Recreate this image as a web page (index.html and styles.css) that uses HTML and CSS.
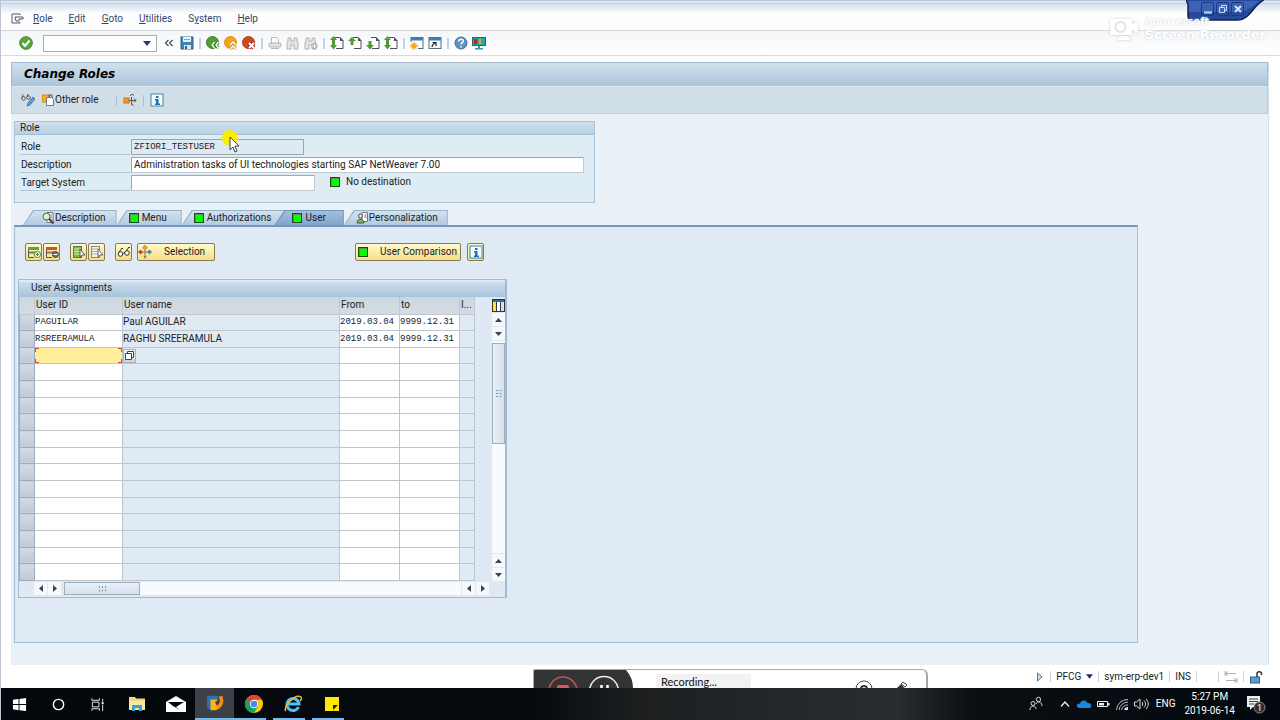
FILE: index.html
```html
<!DOCTYPE html>
<html lang="en">
<head>
<meta charset="utf-8">
<title>Change Roles</title>
<link rel="stylesheet" href="styles.css">
</head>
<body>
<svg class="defs" aria-hidden="true">
  <defs>
    <symbol id="page" viewBox="0 0 14 14"><path d="M5 1.500h5l3 3v8H6" fill="#fff" stroke="#4b5054"/><path d="M10 1v4h3.500z" fill="#4b5054"/></symbol>
    <symbol id="bino" viewBox="0 0 14 14"><path d="M2 2h3v3h3V2h3v3l1 2v6H8V9H5v4H1V7l1-2z" fill="#e4e4e4" stroke="#b4b4b4"/></symbol>
    <symbol id="info" viewBox="0 0 14 14"><rect x="1" y="1" width="12" height="12" fill="#f4fbff" stroke="#3d86a8"/><path d="M6 3h2.500v2H6zM5 6h3.500v4.500H10V12H5v-1.500h1V7.500H5z" fill="#1a76b0"/></symbol>
    <symbol id="led" viewBox="0 0 10 10"><rect x=".5" y=".5" width="9" height="9" fill="#0f0" stroke="#1d4a1d"/><path d="M1.500 9V1.500H9" fill="none" stroke="#5f8f4f"/></symbol>
  </defs>
</svg>

<header class="menubar">
  <svg class="i14" viewBox="0 0 14 14"><path d="M10 3V2H2v9h8v-1" fill="none" stroke="#4a5568"/><path d="M5 5h8v2H9v2H6z" fill="#fff" stroke="#4a5568"/></svg>
  <nav class="menus">
    <button><u>R</u>ole</button><button><u>E</u>dit</button><button><u>G</u>oto</button><button><u>U</u>tilities</button><button>S<u>y</u>stem</button><button><u>H</u>elp</button>
  </nav>
</header>

<div class="toolbar">
  <button class="ok" aria-label="Enter"><svg class="i14" viewBox="0 0 14 14"><circle cx="7" cy="7" r="6.300" fill="#57a83a" stroke="#3c8428"/><path d="M3.500 7l2.500 3 4.500-5.500" fill="none" stroke="#fff" stroke-width="2"/></svg></button>
  <div class="combo"><input aria-label="Command field"><button aria-label="Show history"><svg viewBox="0 0 8 5"><path d="M0 0h8L4 5z" fill="#1f3c78"/></svg></button></div>
  <button class="collapse" aria-label="Collapse command field"><svg class="i14" viewBox="0 0 14 14"><path d="M6.500 4l-3 3 3 3M10.500 4l-3 3 3 3" fill="none" stroke="#3f4650" stroke-width="1.200"/></svg></button>
  <button aria-label="Save"><svg class="i14" viewBox="0 0 14 14"><rect x="1" y="1" width="12" height="12" fill="#3f82b5" stroke="#2d668f"/><rect x="3" y="1" width="8" height="5" fill="#e6f3fb"/><path d="M4 3.500h6" stroke="#7aa5c3"/><rect x="4" y="9" width="7" height="4" fill="#d7e6f1"/><rect x="5" y="10" width="2" height="3" fill="#2b5f88"/></svg></button>
  <i class="sep"></i>
  <div class="group">
    <button aria-label="Back"><svg class="i14" viewBox="0 0 14 14"><circle cx="6.500" cy="6.500" r="6" fill="#4f9e35" stroke="#3d8029"/><path d="M8.500 6l-2.500 3 2.500 3M12.500 6L10 9l2.500 3" fill="none" stroke="#3d8029" stroke-width="3"/><path d="M8.500 6l-2.500 3 2.500 3M12.500 6L10 9l2.500 3" fill="none" stroke="#fff" stroke-width="1.300"/></svg></button>
    <button aria-label="Exit"><svg class="i14" viewBox="0 0 14 14"><circle cx="6.500" cy="6.500" r="6" fill="#f2a51c" stroke="#d78c18"/><path d="M6 9l3-3 3 3M6 13l3-3 3 3" fill="none" stroke="#d78c18" stroke-width="3"/><path d="M6 9l3-3 3 3M6 13l3-3 3 3" fill="none" stroke="#fff" stroke-width="1.500"/></svg></button>
    <button aria-label="Cancel"><svg class="i14" viewBox="0 0 14 14"><circle cx="6.500" cy="6.500" r="6" fill="#cf4a1a" stroke="#b04018"/><path d="M7 7l5 5M12 7l-5 5" stroke="#a33" stroke-width="4"/><path d="M7 7l5 5M12 7l-5 5" stroke="#fff" stroke-width="2"/></svg></button>
  </div>
  <i class="sep"></i>
  <div class="group">
    <button aria-label="Print" disabled><svg class="i14" viewBox="0 0 14 14"><path d="M3.500 7V1.500h5l2 2V7" fill="#fafafa" stroke="#b8b8b8"/><rect x="1" y="7" width="12" height="4" rx="1" fill="#e2e2e2" stroke="#b4b4b4"/><path d="M3 12.500h8" stroke="#b8b8b8"/></svg></button>
    <button aria-label="Find" disabled><svg class="i14"><use href="#bino"/></svg></button>
    <button aria-label="Find next" disabled><svg class="i14" viewBox="0 0 14 14"><use href="#bino" width="14" height="14"/><path d="M10.500 7v6M7.500 10h6" stroke="#aaa" stroke-width="3"/><path d="M10.500 8v4M8.500 10h4" stroke="#fff"/></svg></button>
  </div>
  <i class="sep"></i>
  <div class="group">
    <button aria-label="First page"><svg class="i14" viewBox="0 0 14 14"><use href="#page" width="14" height="14"/><path d="M0 4l3.500-4L7 4H5v5h2l-3.500 4.500L0 9h2V4z" fill="#4d9a36"/></svg></button>
    <button aria-label="Previous page"><svg class="i14" viewBox="0 0 14 14"><use href="#page" width="14" height="14"/><path d="M0 5l4-4 4 4H5.500v4h-3V5z" fill="#4d9a36"/></svg></button>
    <button aria-label="Next page"><svg class="i14" viewBox="0 0 14 14"><use href="#page" width="14" height="14"/><path d="M0 9h2.500V5h3v4H8l-4 4.500z" fill="#4d9a36"/></svg></button>
    <button aria-label="Last page"><svg class="i14" viewBox="0 0 14 14"><use href="#page" width="14" height="14"/><path d="M0 4l3.500-4L7 4H5v5h2l-3.500 4.500L0 9h2V4z" fill="#4d9a36"/></svg></button>
  </div>
  <i class="sep"></i>
  <div class="group">
    <button aria-label="New session"><svg class="i14" viewBox="0 0 14 14"><rect x="1" y="1.500" width="12" height="11" fill="#f8fcff" stroke="#4f6f86"/><path d="M1 3h12" stroke="#3f7fb5" stroke-width="3"/><path d="M0 6h8v8H0z" fill="#fbfdff"/><path d="M4 6v8M0 10h8M1.500 7.500l5 5M6.500 7.500l-5 5" stroke="#f5a623" stroke-width="1.300"/></svg></button>
    <button aria-label="Create shortcut"><svg class="i14" viewBox="0 0 14 14"><rect x="1" y="1.500" width="12" height="11" fill="#f8fcff" stroke="#4f6f86"/><path d="M1 3h12" stroke="#3f7fb5" stroke-width="3"/><path d="M4 11c0-2 1-3 3-4M4.500 6.500H8V10" fill="none" stroke="#222" stroke-width="1.200"/></svg></button>
  </div>
  <i class="sep"></i>
  <div class="group">
    <button aria-label="Help"><svg class="i14" viewBox="0 0 14 14"><circle cx="7" cy="7" r="6" fill="#5b93c4" stroke="#3f6d96"/><path d="M4.800 5.500c0-3 4.500-3 4.500-.4C9.300 7 7 6.700 7 8.500M7 10v1.500" fill="none" stroke="#fff" stroke-width="1.500"/></svg></button>
    <button aria-label="Customize layout"><svg class="i14" viewBox="0 0 14 14"><rect x=".5" y="1.500" width="13" height="8" fill="#25a6a9" stroke="#3b5b6c"/><path d="M2 3h3v5H2z" fill="#c11f24"/><path d="M5 3h2v5H5z" fill="#52a02e"/><path d="M7 3h2v5H7z" fill="#d9b41e"/><path d="M6 10h2v2h3v1.500H3V12h3z" fill="#3c8fae"/></svg></button>
  </div>
</div>

<main class="work">
  <h1 class="title">Change Roles</h1>
  <div class="appbar">
    <button aria-label="Display or change"><svg class="i14" viewBox="0 0 14 14"><path d="M1 5l1-3.500M6 4l1-3" stroke="#555" fill="none"/><circle cx="2.500" cy="5.500" r="1.800" fill="none" stroke="#555"/><circle cx="7.500" cy="4.500" r="1.800" fill="none" stroke="#555"/><path d="M6 13l1-3 5-6 2 2-5 6z" fill="#5f9fcb" stroke="#3c6f94" stroke-width=".8"/></svg></button>
    <button class="other"><svg class="i12" viewBox="0 0 12 12"><rect x=".5" y="1" width="7" height="7" fill="#f5ae27" stroke="#d8901a"/><path d="M4.500 3.500h5l2 2v6h-7z" fill="#fff" stroke="#777"/><path d="M7 3V1h3v3" fill="none" stroke="#555"/></svg>Other role</button>
    <i class="sep"></i>
    <button aria-label="Transport"><svg class="i14" viewBox="0 0 14 14"><rect x="1" y="5" width="5" height="5" fill="#f39a25" stroke="#cd7614"/><path d="M6 7.500h7M11 5.500l2 2-2 2M8.500 4v8M7 3l1.500-1.500L11 2M8.500 11l2 2" fill="none" stroke="#555"/></svg></button>
    <i class="sep"></i>
    <button aria-label="Information"><svg class="i14"><use href="#info"/></svg></button>
  </div>

  <div class="content">
    <section class="rolebox">
      <h2>Role</h2>
      <div class="field"><label for="role">Role</label><input id="role" class="mono readonly w-role" value="ZFIORI_TESTUSER" readonly></div>
      <div class="field"><label for="desc">Description</label><input id="desc" class="w-desc" value="Administration tasks of UI technologies starting SAP NetWeaver 7.00"></div>
      <div class="field"><label for="target">Target System</label><input id="target" class="w-target"><span class="dest"><svg class="i10"><use href="#led"/></svg>No destination</span></div>
    </section>

    <div class="tabs" role="tablist">
      <button role="tab" class="tab first"><span><svg class="i12" viewBox="0 0 12 12"><path d="M5 .5h6v10H5z" fill="#fff" stroke="#777"/><path d="M7 3h3M7 5h3M7 7h3" stroke="#888"/><circle cx="4.500" cy="4.500" r="3.500" fill="#dff0c8" stroke="#4c6b3c"/><path d="M7 7l4.500 4.500" stroke="#444" stroke-width="2"/></svg>Description</span></button>
      <button role="tab" class="tab"><span class="ledgap"><svg class="i10"><use href="#led"/></svg>Menu</span></button>
      <button role="tab" class="tab"><span class="ledgap"><svg class="i10"><use href="#led"/></svg>Authorizations</span></button>
      <button role="tab" class="tab active" aria-selected="true"><span class="ledgap"><svg class="i10"><use href="#led"/></svg>User</span></button>
      <button role="tab" class="tab last"><span><svg class="i12" viewBox="0 0 12 12"><path d="M6 .5h5.500v9H6z" fill="#fff" stroke="#777"/><path d="M8.500 3h2M8.500 5h2" stroke="#555"/><circle cx="4.500" cy="4" r="2" fill="#f1f1f1" stroke="#444"/><path d="M1 11c0-5 7-5 7 0z" fill="#7cb356" stroke="#3f5f31"/></svg>Personalization</span></button>
    </div>

    <section class="panel">
      <div class="actions">
        <div class="pair">
          <button class="yb sq" aria-label="Insert row"><svg class="i14" viewBox="0 0 14 14"><path d="M1.500 2v10.500H7" fill="none" stroke="#555"/><path d="M1 3.500h11" stroke="#5ca832" stroke-width="3"/><path d="M2 7.500h9" stroke="#777" stroke-width="2"/><circle cx="10.500" cy="9.500" r="3" fill="#fff" stroke="#3e8a35"/><path d="M10.500 8v3M9 9.500h3" stroke="#3e8a35"/></svg></button>
          <button class="yb sq" aria-label="Delete row"><svg class="i14" viewBox="0 0 14 14"><path d="M1.500 2v10.500H7" fill="none" stroke="#555"/><path d="M1 3.500h11" stroke="#d2501e" stroke-width="3"/><path d="M2 7.500h9" stroke="#777" stroke-width="2"/><circle cx="10.500" cy="9.500" r="3" fill="#777" stroke="#444"/><path d="M8.500 9.500h4" stroke="#fff"/></svg></button>
        </div>
        <div class="pair">
          <button class="yb sq" aria-label="Select all"><svg class="i14" viewBox="0 0 14 14"><rect x="1.500" y="1.500" width="8" height="11" fill="#7cba4d" stroke="#5b7350"/><path d="M2 4h7M2 6.500h7M2 9h7" stroke="#d6eabf"/><path d="M8 4v8l2-2h3z" fill="#fff" stroke="#555"/></svg></button>
          <button class="yb sq" aria-label="Deselect all"><svg class="i14" viewBox="0 0 14 14"><rect x="1.500" y="1.500" width="8" height="11" fill="#f6f6ee" stroke="#888"/><path d="M2 4h7M2 6.500h7M2 9h7" stroke="#aaa"/><path d="M8 4v8l2-2h3z" fill="#fff" stroke="#666"/></svg></button>
        </div>
        <button class="yb sq" aria-label="Display"><svg class="i14" viewBox="0 0 14 14"><path d="M1.500 8l3.500-5 1 1M8.500 7l3.500-5 1 1M6 9c1-2 2-2 2 0" fill="none" stroke="#333"/><circle cx="3.500" cy="9" r="2.300" fill="#fff" stroke="#333"/><circle cx="10" cy="8" r="2.300" fill="#fff" stroke="#333"/></svg></button>
        <button class="yb sel-btn"><svg class="i14" viewBox="0 0 14 14"><path d="M7 3v9M3 7h8" stroke="#777"/><path d="M7 0l2.500 3L7 5 4.500 3z" fill="#f1a22b" stroke="#c47a15" stroke-width=".6"/><path d="M0 7l2.500-2.500L5 7 2.500 9.500z" fill="#d4421e"/><path d="M9 7l2.500-2.500L14 7l-2.500 2.500z" fill="#3d8fb8"/><path d="M5.500 11h3L7 14z" fill="#777"/></svg><span>Selection</span></button>
        <button class="yb cmp-btn"><svg class="i10"><use href="#led"/></svg><span>User Comparison</span></button>
        <button class="yb sq info-btn" aria-label="Information"><svg class="i14"><use href="#info"/></svg></button>
      </div>

      <section class="gridbox">
        <h2>User Assignments</h2>
        <div class="gridarea">
          <div class="tablewrap">
            <table>
              <colgroup><col class="c-sel"><col class="c-id"><col class="c-name"><col class="c-date"><col class="c-date"><col class="c-ind"></colgroup>
              <thead><tr><th aria-label="Row"></th><th>User ID</th><th>User name</th><th>From</th><th>to</th><th>I...</th></tr></thead>
              <tbody id="rows"></tbody>
            </table>
          </div>
          <div class="vscroll">
            <button class="cfg" aria-label="Table settings"><svg viewBox="0 0 13 13"><rect x=".5" y=".5" width="12" height="12" fill="#fff" stroke="#333"/><path d="M1 2h11" stroke="#2d6fb0" stroke-width="2"/><path d="M1 3h3.500v9H1z" fill="#ffe52e"/><path d="M9 3h3v9H9z" fill="#cfe4f6"/><path d="M4.500 3v9M8.500 3v9" stroke="#333"/></svg></button>
            <button class="arr" aria-label="Scroll up"><svg viewBox="0 0 7 4"><path d="M0 4h7L3.500 0z"/></svg></button>
            <button class="arr" aria-label="Scroll down"><svg viewBox="0 0 7 4"><path d="M0 0h7L3.500 4z"/></svg></button>
            <div class="track"><div class="thumb"><svg viewBox="0 0 6 7"><path d="M0 .5h2M3.500 .5h2M0 3.500h2M3.500 3.500h2M0 6.500h2M3.500 6.500h2"/></svg></div></div>
            <button class="arr" aria-label="Page up"><svg viewBox="0 0 7 4"><path d="M0 4h7L3.500 0z"/></svg></button>
            <button class="arr" aria-label="Page down"><svg viewBox="0 0 7 4"><path d="M0 0h7L3.500 4z"/></svg></button>
          </div>
        </div>
        <div class="hscroll">
          <button class="arr" aria-label="Scroll left"><svg class="hz" viewBox="0 0 4 7"><path d="M4 0v7L0 3.500z"/></svg></button>
          <button class="arr" aria-label="Scroll right"><svg class="hz" viewBox="0 0 4 7"><path d="M0 0v7l4-3.500z"/></svg></button>
          <div class="track"><div class="thumb"><svg class="grip" viewBox="0 0 7 6"><path d="M.5 0v2M3.500 0v2M6.500 0v2M.5 3.500v2M3.500 3.500v2M6.500 3.500v2"/></svg></div></div>
          <button class="arr" aria-label="Page left"><svg class="hz" viewBox="0 0 4 7"><path d="M4 0v7L0 3.500z"/></svg></button>
          <button class="arr" aria-label="Page right"><svg class="hz" viewBox="0 0 4 7"><path d="M0 0v7l4-3.500z"/></svg></button>
        </div>
      </section>
    </section>
  </div>
</main>

<footer class="status">
  <svg class="i10" viewBox="0 0 10 10"><path d="M2.500 1v8L7 5z" fill="#cfe3f5" stroke="#3f78ad"/></svg>
  <i class="bar"></i><button>PFCG<svg class="dd" viewBox="0 0 8 5"><path d="M0 0h8L4 5z" fill="#1f3560"/></svg></button>
  <i class="bar"></i><span>sym-erp-dev1</span>
  <i class="bar"></i><span>INS</span>
  <i class="bar"></i><i class="bar later"></i>
  <svg class="i14" viewBox="0 0 14 14"><path d="M1 1v5M1 3.500h11M4 1.500l-3 2 3 2M13 8v5M2 10.500h11M10 8.500l3 2-3 2" fill="none" stroke="#aeb2b8"/></svg>
  <i class="bar"></i>
  <svg class="i14" viewBox="0 0 14 14"><rect x="1.500" y="7" width="9" height="6" fill="#5d9dca" stroke="#2f5d82"/><path d="M8 7V3.500c0-2.500 4.500-2.500 4.500 0V5" fill="none" stroke="#333" stroke-width="1.500"/></svg>
</footer>

<footer class="taskbar">
  <div class="apps">
    <button aria-label="Start"><svg viewBox="0 0 16 16"><path d="M1 3l6-1v5.500H1zM8 2l7-1v6.500H8zM1 8.500h6V14l-6-1zM8 8.500h7V15l-7-1z" fill="#fff"/></svg></button>
    <button aria-label="Cortana"><svg viewBox="0 0 16 16"><circle cx="8" cy="8" r="5.500" fill="none" stroke="#fff" stroke-width="1.500"/></svg></button>
    <button aria-label="Task view"><svg viewBox="0 0 16 16"><path d="M2 1.500v2h8v-2M2 14.500v-2h8v2M2.500 5.500h7v5h-7zM13.500 2v3M13.500 8v7" fill="none" stroke="#eee"/><path d="M12.500 5.500h2v2h-2z" fill="#fff"/></svg></button>
    <button aria-label="File Explorer"><svg viewBox="0 0 18 16"><path d="M1 1h6l1 1.500h9V14H1z" fill="#f6d778"/><path d="M1 5h16v9H1z" fill="#fbe6a0"/><path d="M4 15V9h10v6h-3v-3H7v3z" fill="#37a3d6"/></svg></button>
    <button aria-label="Mail"><svg class="mail" viewBox="0 0 20 16"><path d="M0 6l10-6 10 6v10H0z" fill="#fff"/><path d="M2 6h16l-8 5 4 3-7-4z" fill="#05080d"/></svg></button>
    <button aria-label="SAP Logon" class="current"><svg viewBox="0 0 20 18"><path d="M1 1h13l-1 4-6 1-1 10-5-1z" fill="#2e6fae"/><path d="M5 5l8 0-1 2-2 1 2 4 4-2c2 0 0 6-6 7H5z" fill="#fbb315"/><path d="M13 11c3-2 3-6 1-9l4-1c3 7 0 14-6 15z" fill="#f08e12"/></svg></button>
    <button aria-label="Chrome" class="running"><svg viewBox="0 0 18 18"><circle cx="9" cy="9" r="9" fill="#f9c813"/><path d="M9 9L1.200 4.500A9 9 0 0 1 16.800 4.500z" fill="#dc4437"/><path d="M9 9L1.200 4.500A9 9 0 0 0 9 18l4-7z" fill="#1ba15f"/><path d="M9 9h8.900A9 9 0 0 0 16.800 4.800H9z" fill="#f9c813"/><circle cx="9" cy="9" r="4.200" fill="#fff"/><circle cx="9" cy="9" r="3.300" fill="#4587f3"/></svg></button>
    <button aria-label="Internet Explorer" class="running"><svg viewBox="0 0 18 18"><path d="M14.500 12A6 6 0 1 1 15 9H4.500" fill="none" stroke="#4cc0f4" stroke-width="3"/><path d="M2 16C-2 13 11-2 17 2c1 1 0 3-1 4" fill="none" stroke="#f1b72d" stroke-width="1.500"/></svg></button>
    <button aria-label="Sticky Notes" class="running"><svg viewBox="0 0 18 18"><path d="M2 2h14v14H2z" fill="#ffe900"/><path d="M10 10h5l-5 5z" fill="#222"/></svg></button>
  </div>
  <div class="tray">
    <svg viewBox="0 0 16 16"><path d="M2 14c0-5 6-5 6-1M8 8c1-3 6-3 6 2" fill="none" stroke="#ddd"/><circle cx="5" cy="7.500" r="2" fill="none" stroke="#ddd"/><circle cx="10.500" cy="3.500" r="2.200" fill="none" stroke="#ddd"/></svg>
    <svg class="chev" viewBox="0 0 16 16"><path d="M4 10.500l4-4.500 4 4.500" fill="none" stroke="#eee" stroke-width="1.300"/></svg>
    <svg viewBox="0 0 16 16"><path d="M3 12c-4-1-2-5 1-4.500 1-4 6-4 7.500-.5 4-.5 5 4 2 5z" fill="#1a87dc"/></svg>
    <svg viewBox="0 0 16 16"><path d="M2.500 5.500h10v5h-10z" fill="none" stroke="#eee"/><path d="M4 7h5v2.500H4zM13 7h1.500v2.500H13z" fill="#eee"/></svg>
    <svg viewBox="0 0 16 16"><path d="M2.500 14A11 11 0 0 1 14 3.500M5 14A9 9 0 0 1 14 6M7.500 14A6 6 0 0 1 14 9" fill="none" stroke="#bbb"/><path d="M10 14a4 4 0 0 1 4-3v3z" fill="#ddd"/></svg>
    <svg viewBox="0 0 16 16"><path d="M1.500 6v4h2L7 13V3L3.500 6zM9 6c1 1 1 3 0 4M11 4.500c2 2 2 5 0 7M13 3c3 3 3 7 0 10" fill="none" stroke="#ddd"/></svg>
    <span class="lang">ENG</span>
    <time class="clock"><span>5:27 PM</span><span>2019-06-14</span></time>
    <svg class="note" viewBox="0 0 20 20"><path d="M1 2h13v11H7l-3 3v-3H1z" fill="#eee"/><path d="M3 5h9M3 7.500h9M3 10h5" stroke="#444"/><circle cx="13.500" cy="13.500" r="5.500" fill="#2c3033" stroke="#888"/><text x="13.500" y="17" text-anchor="middle">1</text></svg>
  </div>
</footer>

<div class="wincap">
  <svg class="capshape" viewBox="0 0 78 21"><path d="M0 0h78C68 4 64 20 52 20H6q-4 0-4-4V4z" fill="#254a9c"/><path d="M2 1h72C67 5 62 12 52 12H2z" fill="#3c62b4"/><path d="M0 0l2 4v12q0 4 4 4h46C64 20 68 4 78 0" fill="none" stroke="#16224a" stroke-width="1.500"/></svg>
  <div class="capbtns">
    <button aria-label="Minimize"><svg viewBox="0 0 12 12"><path d="M2 9.500h8" stroke="#c4dbff" stroke-width="2"/></svg></button>
    <button aria-label="Restore"><svg viewBox="0 0 12 12"><path d="M4.500 4V2.500h5v5H8M2.500 4.500h5v5h-5z" fill="none" stroke="#c4dbff"/></svg></button>
    <button aria-label="Close"><svg viewBox="0 0 12 12"><path d="M3 3l6 6M9 3L3 9" stroke="#d4e5ff" stroke-width="2"/></svg></button>
  </div>
</div>

<div class="watermark">
  <svg viewBox="0 0 32 28"><path d="M1 3h22v5l6-3v12l-6-3v5H1zM8 24h14l-3-4h-8z" fill="#fff"/><circle cx="11.500" cy="11" r="5" fill="none" stroke="#dfe3ea" stroke-width="2"/></svg>
  <div><span>Apowersoft</span><strong>Screen Recorder</strong></div>
</div>

<div class="recorder">
  <svg class="dark" viewBox="0 0 102 18"><path d="M0 0h92q7 8 7 18H0z" fill="#323435"/><circle cx="29" cy="21" r="14" fill="none" stroke="#c8504f" stroke-width="1.500"/><rect x="23" y="15" width="12" height="8" rx="2" fill="#e0575a"/><circle cx="70" cy="21" r="14.500" fill="none" stroke="#eee" stroke-width="1.500"/><path d="M67.500 15v6M73.500 15v6" stroke="#fff" stroke-width="2.500"/></svg>
  <span>Recording...</span>
  <svg class="tools" viewBox="0 0 60 18"><circle cx="12" cy="19" r="8" fill="none" stroke="#444"/><circle cx="12" cy="19" r="3" fill="none" stroke="#333" stroke-width="2"/><path d="M43 20l8-8 4 3-7 6z" fill="#333"/><path d="M49 14l3 3" stroke="#fff"/><path d="M51 12l4 3-2 2-4-3z" fill="#fff" stroke="#444"/></svg>
</div>

<svg class="cursor" viewBox="0 0 20 24"><circle cx="8" cy="8" r="8" fill="#f7ee00"/><path d="M8 7v13l3-3 2 5 2-1-2-5h4z" fill="#fff" stroke="#444"/></svg>
<script src="rows.js"></script>
</body>
</html>
```
FILE: styles.css
```css
* { box-sizing: border-box; }
body {
  margin: 0; min-height: 100vh; display: flex; flex-direction: column; position: relative;
  font: 10px/14px Roboto, "Open Sans", sans-serif; color: #1c2024; background: #fff;
  border-left: 1px solid #c0c4d2;
}
button, input { font: inherit; color: inherit; margin: 0; padding: 0; border: 0; background: none; }
button { display: flex; align-items: center; white-space: nowrap; }
h1, h2 { margin: 0; font-weight: normal; font-size: 10px; }
svg { display: block; flex: none; }
.defs { position: absolute; width: 0; height: 0; }
.i14 { width: 14px; height: 14px; }
.i12 { width: 12px; height: 12px; }
.i10 { width: 10px; height: 10px; }

.menubar {
  height: 31px; padding: 8px 0 0 9px; display: flex; align-items: center; gap: 9px; flex: none;
  background: linear-gradient(#b9c5d8 0, #b9c5d8 1px, #e6edf6 1px, #e6edf6 2px, #c4d0e0 3px, #dbe4f0 5px, #fff 14px, #fdfdfe);
  border-bottom: 1px solid #d5dae0; color: #33466b;
}
.menus { display: flex; gap: 16px; }
.toolbar {
  height: 25px; flex: none; display: flex; align-items: center; padding-left: 18px;
  background: linear-gradient(#f4f6f8, #fff); border-bottom: 1px solid #d8dade;
}
.combo { width: 114px; height: 17px; margin-left: 10px; display: flex; border: 1px solid #a7acb5; background: #fff; }
.combo input { flex: 1; min-width: 0; }
.combo button { padding: 0 5px; }
.combo svg { width: 8px; height: 5px; }
.collapse { margin: 0 4px 0 5px; }
.sep { width: 2px; height: 11px; margin: 0 5px; background: #bfd3e6; }
.group { display: flex; gap: 4px; }

.work { flex: 1; display: flex; flex-direction: column; margin: 6px 11px 0 10px; border-right: 1px solid #d5e2ec; }
.title {
  height: 25px; padding-left: 12px; border: 1px solid #a5bccf; border-bottom-color: #dce9f2;
  background: linear-gradient(#d0e0ec, #abc4da);
  font: italic bold 12px/22px "DejaVu Sans", sans-serif; color: #000;
}
.appbar {
  height: 27px; flex: none; display: flex; align-items: center; padding-left: 9px;
  background: #d0dee7; border: 1px solid #bccfdc; border-top: 0;
}
.other { gap: 1px; margin: 0 11px 0 7px; }
.appbar .sep { width: 1px; background: #a9c0d2; margin: 0 6px; }
.content { flex: 1; padding: 7px 130px 22px 3px; background: #e9f1f7; }

.rolebox { max-width: 581px; padding-bottom: 9px; border: 1px solid #a9c2d8; background: #deecf3; }
.rolebox h2 { height: 13px; margin-bottom: 4px; padding-left: 5px; line-height: 12px; background: linear-gradient(#d0e1ee, #b9d0e4); border-bottom: 1px solid #a3bfd8; }
.field { display: flex; align-items: stretch; height: 16px; margin: 0 10px 2px 5px; }
.field label { width: 110px; margin-right: 1px; padding-left: 1px; line-height: 15px; border-bottom: 1px solid #b4c6d2; }
.field input { padding: 0 2px; background: #fff; border: 1px solid #9fa6b0; border-right-color: #c3cad2; border-bottom-color: #c3cad2; }
.field .readonly { background: #deeaf3; border-color: #9aa7b5; }
.mono, td .mono { font: 9px/14px "Liberation Mono", monospace; }
.w-role { width: 173px; }
.w-desc { width: 453px; }
.w-target { width: 184px; }
.dest { display: flex; align-items: center; gap: 6px; height: 14px; margin-left: 15px; }

.tabs { display: flex; padding: 7px 0 0 9px; }
.tab { position: relative; height: 15px; padding: 1px 15px 0 12px; background: #95b2cc; clip-path: polygon(10px 0, 100% 0, 100% 100%, 0 100%); }
.tab::before { content: ""; position: absolute; inset: 1px 1px 0 1px; background: linear-gradient(#d3e2ee, #b3cbe0); clip-path: polygon(10px 0, 100% 0, 100% 100%, 0 100%); }
.tab span { position: relative; display: flex; align-items: center; gap: 1px; }
.tab .ledgap { gap: 3px; }
.first { padding-left: 19px; padding-right: 11px; }
.last { padding-right: 10px; }
.active { margin-left: -12px; padding: 1px 18px 0 18px; background: #6c93bf; }
.active::before { background: linear-gradient(#a3c0dc, #7fa5cd); }

.panel { padding: 15px 0 44px 3px; background: #e0eaf4; border: 1px solid #a3bed5; border-top: 2px solid #7397be; }
.actions { display: flex; align-items: center; height: 19px; margin: 0 0 18px 7px; }
.pair { display: flex; gap: 1px; margin-right: 10px; }
.yb { height: 18px; border: 1px solid #857c55; border-radius: 2px; background: linear-gradient(#fff9cf, #f6df82); }
.sq { width: 17px; justify-content: center; }
.sel-btn { width: 78px; margin-left: 5px; }
.sel-btn span { margin-left: 12px; }
.cmp-btn { width: 106px; margin-left: 140px; padding-left: 2px; }
.cmp-btn span { margin-left: 12px; }
.info-btn { margin-left: 6px; }

.gridbox { max-width: 489px; padding: 2px 0 0; border: 1px solid #9fbcd4; border-right-width: 2px; background: #dfe9f3; }
.gridbox h2 { height: 15px; padding-left: 12px; line-height: 12px; background: linear-gradient(#cddeec, #a8c3da); }
.gridarea { display: flex; justify-content: space-between; }
.tablewrap { flex: none; }
table { width: 455px; height: 284px; table-layout: fixed; border-collapse: collapse; }
.c-sel { width: 15px; } .c-id { width: 88px; } .c-name { width: 217px; } .c-date { width: 60px; } .c-ind { width: 15px; }
th { height: 17px; padding: 0 1px; text-align: left; font-weight: normal; line-height: 16px; white-space: nowrap; background: linear-gradient(#ccd7df, #d5dce1); border: 1px solid #bdc8d2; border-top: 0; }
td { height: 16px; padding: 0; line-height: 14px; border: 1px solid #bcc6cf; background: #e0eaf4; white-space: nowrap; }
td.in { background: #fff; }
td.mark { background: linear-gradient(#d2dbe4, #bfcad5); border-color: #9fabb8; }
td input { display: block; width: 100%; height: 14px; padding: 0; }
td.focus { position: relative; background: #ffee9b; }
.focus::before { content: ""; position: absolute; inset: 0; pointer-events: none;
  background: linear-gradient(#e0442c, #e0442c) 0 0/4px 1px, linear-gradient(#e0442c, #e0442c) 0 0/1px 4px, linear-gradient(#e0442c, #e0442c) 100% 0/4px 1px, linear-gradient(#e0442c, #e0442c) 100% 0/1px 4px, linear-gradient(#e0442c, #e0442c) 0 100%/4px 1px, linear-gradient(#e0442c, #e0442c) 0 100%/1px 4px, linear-gradient(#e0442c, #e0442c) 100% 100%/4px 1px, linear-gradient(#e0442c, #e0442c) 100% 100%/1px 4px;
  background-repeat: no-repeat; }
.f4 { width: 13px; height: 14px; justify-content: center; background: linear-gradient(#f2f4f7, #ccd4de); border: 1px solid #a9b3be; }
.f4 svg { width: 9px; height: 9px; }

.vscroll { width: 13px; display: flex; flex-direction: column; gap: 1px; padding-top: 2px; }
.cfg svg { width: 13px; height: 13px; }
.arr { width: 13px; height: 13px; justify-content: center; background: #f6f9fc; flex: none; }
.arr svg { width: 7px; height: 4px; fill: #3a4450; }
.arr svg.hz { width: 4px; height: 7px; }
.track { flex: 1; background: #f8fbfd; }
.thumb { display: flex; align-items: center; justify-content: center; border: 1px solid #9faebc; background: linear-gradient(90deg, #e8f0f8, #d5e1ec); }
.thumb svg { width: 6px; height: 7px; stroke: #8495a5; }
.thumb svg.grip { width: 7px; height: 6px; }
.vscroll .track { padding-top: 2px; }
.vscroll .thumb { height: 101px; }
.hscroll { display: flex; gap: 1px; margin: 1px 16px 2px 15px; }
.hscroll .track { margin-left: 2px; }
.hscroll .thumb { width: 76px; height: 13px; background: linear-gradient(#e8f0f8, #d5e1ec); }

.status { height: 23px; flex: none; display: flex; align-items: center; justify-content: flex-end; gap: 5px; padding-right: 17px; }
.status button { gap: 5px; }
.dd { width: 7px; height: 5px; }
.bar { width: 1px; height: 11px; background: #d0d3d8; }
.later { margin-left: 16px; }

.taskbar { position: relative; height: 32px; margin-left: -1px; flex: none; display: flex; justify-content: space-between; color: #fff; background: linear-gradient(90deg, #04080d 0, #070b10 42%, #1d1f20 50%, #24282c 62%, #292d2f 70%, #0a0f14 76%, #03080e 100%); }
.apps { display: flex; }
.apps button { width: 39px; height: 32px; justify-content: center; }
.apps svg { width: 18px; height: 18px; }
.apps .mail { width: 20px; }
.apps button:nth-child(-n+3) svg { width: 15px; height: 15px; }
.apps .current { background: #3c4147; border-bottom: 2px solid #76b9ed; }
.apps .running { position: relative; }
.running::after { content: ""; position: absolute; left: 0; right: 7px; bottom: 0; height: 2px; background: #76b9ed; }
.tray { display: flex; align-items: center; gap: 3px; padding-right: 14px; }
.tray svg { width: 16px; height: 16px; }
.tray .chev { margin-left: 10px; }
.lang { margin: 0 6px 0 4px; }
.clock { display: flex; flex-direction: column; align-items: center; margin-right: 8px; }
.tray .note { width: 20px; height: 20px; }
.note text { font: 9px Roboto, sans-serif; fill: #fff; }

.wincap { position: absolute; top: 0; right: 16px; width: 78px; height: 21px; }
.capshape { width: 78px; height: 21px; }
.capbtns { position: absolute; top: 2px; left: 15px; display: flex; gap: 2px; }
.capbtns button { width: 13px; height: 14px; border: 1px solid #1d3a80; border-radius: 2px; justify-content: center; }
.capbtns svg { width: 12px; height: 12px; }
.watermark { position: absolute; top: 16px; right: 14px; display: flex; gap: 4px; color: #fff; text-shadow: 0 0 2px #c2c9d5; pointer-events: none; }
.watermark svg { width: 32px; height: 28px; filter: drop-shadow(0 0 1px #c2c9d5); }
.watermark div { display: flex; flex-direction: column; }
.watermark span { font: bold 10px/12px "DejaVu Sans", sans-serif; }
.watermark strong { font: bold 13px/14px "DejaVu Sans", sans-serif; }

.recorder { position: absolute; left: 532px; bottom: 32px; width: 395px; height: 19px; display: flex; overflow: hidden; background: #fff; border: 1px solid #a5a7a9; border-width: 1px 2px 0 1px; border-radius: 2px 6px 0 0; }
.dark { width: 102px; height: 18px; }
.recorder span { width: 95px; margin: 4px 0 0 20px; padding-left: 5px; background: #f2f2f2; font: 11px/15px Lato, sans-serif; color: #111; }
.tools { width: 60px; height: 18px; margin-left: 101px; }
.cursor { position: absolute; top: 130px; left: 221px; width: 20px; height: 24px; pointer-events: none; }
```
FILE: rows.js
```js
const users = [
  ["PAGUILAR", "Paul AGUILAR", "2019.03.04", "9999.12.31"],
  ["RSREERAMULA", "RAGHU SREERAMULA", "2019.03.04", "9999.12.31"]
];
const matchcode = '<button class="f4" aria-label="Search user"><svg viewBox="0 0 9 9"><path d="M2.500 2.500v-2h6v6h-2M.5 2.500h6v6h-6z" fill="#fff" stroke="#444"/></svg></button>';
const cell = (label, value, extra) =>
  `<td class="in ${extra || ""}"><input class="mono" aria-label="${label}" value="${value || ""}"></td>`;
let html = "";
for (let i = 0; i < 16; i++) {
  const u = users[i] || [];
  html += `<tr><td class="mark"></td>${cell("User ID", u[0], i === 2 ? "focus" : "")}` +
    `<td>${i === 2 ? matchcode : u[1] || ""}</td>${cell("From", u[2])}${cell("To", u[3])}<td></td></tr>`;
}
document.getElementById("rows").innerHTML = html;
```
